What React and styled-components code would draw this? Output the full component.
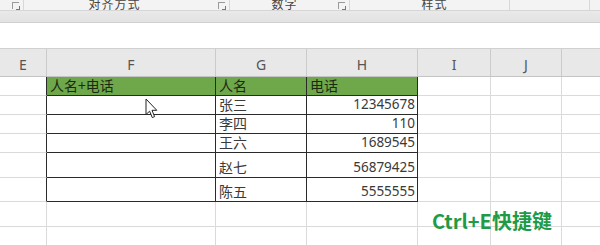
import React from 'react';
import styled, { createGlobalStyle } from 'styled-components';

const GlobalStyle = createGlobalStyle`
  html, body {
    margin: 0;
    padding: 0;
    background: #ffffff;
    overflow: hidden;
  }
  body {
    font-family: "Noto Sans CJK SC", "Noto Sans", sans-serif;
  }
`;

const columns = [
  { key: 'E', width: '47px' },
  { key: 'F', width: '169px' },
  { key: 'G', width: '91px' },
  { key: 'H', width: '111px' },
  { key: 'I', width: '73px' },
  { key: 'J', width: '71px' },
  { key: '', width: '1fr' },
];

const rowHeights = [19, 19, 19, 19, 25, 24, 25, 25];

const people = [
  { name: '张三', phone: '12345678' },
  { name: '李四', phone: '110' },
  { name: '王六', phone: '1689545' },
  { name: '赵七', phone: '56879425' },
  { name: '陈五', phone: '5555555' },
];

const App = () => {
  const rows = [
    { f: '人名+电话', g: '人名', h: '电话', head: true },
    ...people.map((p) => ({ f: '', g: p.name, h: p.phone })),
  ];

  return (
    <Page>
      <GlobalStyle />
      <Ribbon>
        <Group $w={24}>
          <Launcher />
        </Group>
        <Group $w={206} $shift={-12}>
          <GroupLabel>对齐方式</GroupLabel>
          <Launcher />
        </Group>
        <Group $w={120} $shift={-5}>
          <GroupLabel>数字</GroupLabel>
          <Launcher />
        </Group>
        <Group $w={160} $shift={5}>
          <GroupLabel>样式</GroupLabel>
        </Group>
        <Group $w={80} />
      </Ribbon>
      <RibbonBand />
      <FormulaArea />
      <Sheet>
        <HeaderRow>
          {columns.map((c) => (
            <ColHead key={c.key || 'rest'}>{c.key}</ColHead>
          ))}
        </HeaderRow>
        <Grid>
          {rowHeights.map((h, i) => {
            const r = rows[i];
            const inTable = Boolean(r);
            return (
              <React.Fragment key={i}>
                <Cell $darkRight={inTable} />
                <Cell $table={inTable} $head={r && r.head}>{r && r.f}</Cell>
                <Cell $table={inTable} $head={r && r.head}>{r && r.g}</Cell>
                <Cell $table={inTable} $head={r && r.head} $num={r && !r.head}>{r && r.h}</Cell>
                <Cell />
                <Cell />
                <Cell $last />
              </React.Fragment>
            );
          })}
        </Grid>
        <Pointer viewBox="0 0 14 22" width="14" height="22">
          <path
            d="M1 1 L1 16.5 L4.6 13.2 L7.3 19.6 L9.6 18.6 L7 12.3 L11.8 12.3 Z"
            fill="#ffffff"
            stroke="#222222"
            strokeWidth="1"
            strokeLinejoin="round"
          />
        </Pointer>
        <Hint>Ctrl+E快捷键</Hint>
      </Sheet>
    </Page>
  );
};

const Page = styled.div`
  width: 600px;
  height: 245px;
  overflow: hidden;
  display: flex;
  flex-direction: column;
`;

const Ribbon = styled.div`
  height: 11px;
  flex: none;
  display: flex;
  background: #f3f3f3;
  border-bottom: 1px solid #d6d6d6;
  box-sizing: border-box;
  overflow: hidden;
`;

const Group = styled.div`
  width: ${(p) => p.$w}px;
  flex: none;
  position: relative;
  display: flex;
  align-items: flex-end;
  justify-content: center;
  border-right: 1px solid #d8d8d8;
  box-sizing: border-box;
  padding-left: ${(p) => Math.max(0, (p.$shift || 0) * 2)}px;
  padding-right: ${(p) => Math.max(0, -(p.$shift || 0) * 2)}px;
`;

const GroupLabel = styled.span`
  font-size: 12px;
  line-height: 12px;
  color: #444;
  margin-bottom: 0;
  letter-spacing: 1px;
`;

const Launcher = styled.span`
  position: absolute;
  right: 4px;
  bottom: 1px;
  width: 7px;
  height: 7px;
  border-left: 1px solid #9a9a9a;
  border-top: 1px solid #9a9a9a;
  box-sizing: border-box;
  &::after {
    content: '';
    position: absolute;
    right: -1px;
    bottom: -1px;
    width: 3px;
    height: 3px;
    border-right: 1px solid #777;
    border-bottom: 1px solid #777;
  }
`;

const RibbonBand = styled.div`
  height: 12px;
  flex: none;
  background: linear-gradient(#e9e9e9, #e2e2e2);
  border-bottom: 1px solid #cfcfcf;
  box-sizing: border-box;
`;

const FormulaArea = styled.div`
  height: 26px;
  flex: none;
  background: #ffffff;
  border-bottom: 1px solid #d0d0d0;
  box-sizing: border-box;
`;

const Sheet = styled.div`
  position: relative;
  flex: 1;
  overflow: hidden;
`;

const HeaderRow = styled.div`
  display: grid;
  grid-template-columns: ${columns.map((c) => c.width).join(' ')};
  height: 28px;
  background: #e8e8e8;
  border-bottom: 1px solid #c4c4c4;
  box-sizing: border-box;
`;

const ColHead = styled.div`
  display: flex;
  align-items: center;
  justify-content: center;
  font-family: "Noto Sans", sans-serif;
  font-size: 14px;
  color: #555;
  border-right: 1px solid #cbcbcb;
  padding-top: 3px;
  box-sizing: border-box;
  &:last-child {
    border-right: none;
  }
`;

const Grid = styled.div`
  display: grid;
  grid-template-columns: ${columns.map((c) => c.width).join(' ')};
  grid-template-rows: ${rowHeights.map((h) => `${h}px`).join(' ')};
`;

const Cell = styled.div`
  box-sizing: border-box;
  border-right: 1px solid ${(p) => (p.$table || p.$darkRight ? '#2a2a2a' : '#dadada')};
  border-bottom: 1px solid ${(p) => (p.$table ? '#2a2a2a' : '#dadada')};
  background: ${(p) => (p.$head ? '#6fa84a' : '#ffffff')};
  display: flex;
  align-items: flex-end;
  justify-content: ${(p) => (p.$num ? 'flex-end' : 'flex-start')};
  padding: 0 2px 1px 3px;
  font-family: ${(p) => (p.$num ? '"Noto Sans", sans-serif' : '"Noto Sans CJK SC", sans-serif')};
  font-size: ${(p) => (p.$num ? '13.5px' : '14px')};
  line-height: 18px;
  color: ${(p) => (p.$head ? '#1d2a12' : '#3a3a3a')};
  white-space: nowrap;
  overflow: hidden;
  ${(p) => (p.$last ? 'border-right: none;' : '')}
`;

const Pointer = styled.svg`
  position: absolute;
  left: 145px;
  top: 49px;
`;

const Hint = styled.div`
  position: absolute;
  left: 432px;
  top: 158px;
  font-family: "Noto Sans CJK SC", "Noto Sans", sans-serif;
  font-weight: 700;
  font-size: 20px;
  line-height: 28px;
  color: #1f9b45;
  white-space: nowrap;
`;

export default App;
